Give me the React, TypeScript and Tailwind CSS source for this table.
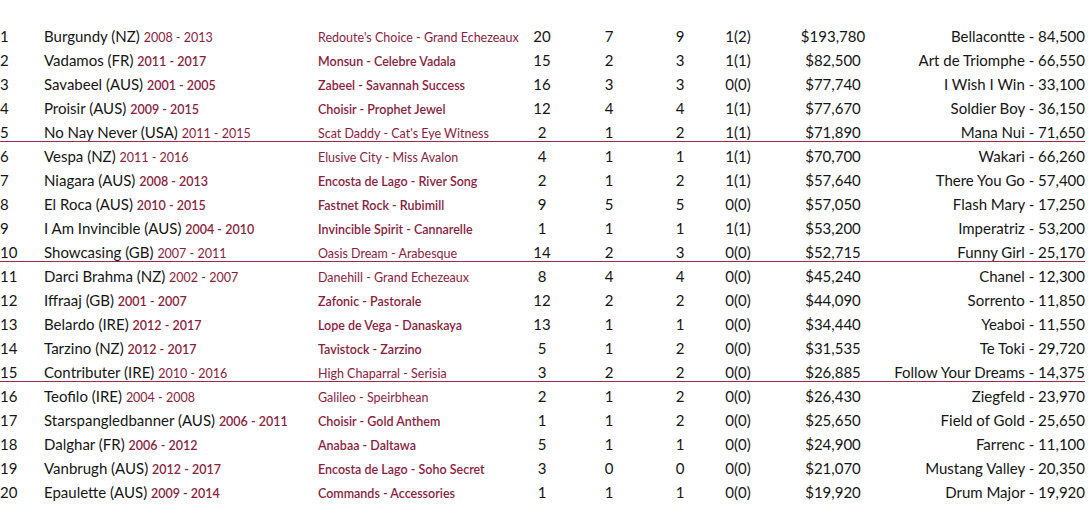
const sires = [
  { n: 1, name: "Burgundy (NZ)", yrs: "2008 - 2013", pedigree: "Redoute's Choice - Grand Echezeaux", runs: "20", wins: "7", places: "9", gr: "1(2)", prize: "$193,780", best: "Bellacontte - 84,500", light: true },
  { n: 2, name: "Vadamos (FR)", yrs: "2011 - 2017", pedigree: "Monsun - Celebre Vadala", runs: "15", wins: "2", places: "3", gr: "1(1)", prize: "$82,500", best: "Art de Triomphe - 66,550" },
  { n: 3, name: "Savabeel (AUS)", yrs: "2001 - 2005", pedigree: "Zabeel - Savannah Success", runs: "16", wins: "3", places: "3", gr: "0(0)", prize: "$77,740", best: "I Wish I Win - 33,100" },
  { n: 4, name: "Proisir (AUS)", yrs: "2009 - 2015", pedigree: "Choisir - Prophet Jewel", runs: "12", wins: "4", places: "4", gr: "1(1)", prize: "$77,670", best: "Soldier Boy - 36,150" },
  { n: 5, name: "No Nay Never (USA)", yrs: "2011 - 2015", pedigree: "Scat Daddy - Cat's Eye Witness", runs: "2", wins: "1", places: "2", gr: "1(1)", prize: "$71,890", best: "Mana Nui - 71,650", light: true, rule: true },
  { n: 6, name: "Vespa (NZ)", yrs: "2011 - 2016", pedigree: "Elusive City - Miss Avalon", runs: "4", wins: "1", places: "1", gr: "1(1)", prize: "$70,700", best: "Wakari - 66,260", light: true },
  { n: 7, name: "Niagara (AUS)", yrs: "2008 - 2013", pedigree: "Encosta de Lago - River Song", runs: "2", wins: "1", places: "2", gr: "1(1)", prize: "$57,640", best: "There You Go - 57,400" },
  { n: 8, name: "El Roca (AUS)", yrs: "2010 - 2015", pedigree: "Fastnet Rock - Rubimill", runs: "9", wins: "5", places: "5", gr: "0(0)", prize: "$57,050", best: "Flash Mary - 17,250" },
  { n: 9, name: "I Am Invincible (AUS)", yrs: "2004 - 2010", pedigree: "Invincible Spirit - Cannarelle", runs: "1", wins: "1", places: "1", gr: "1(1)", prize: "$53,200", best: "Imperatriz - 53,200" },
  { n: 10, name: "Showcasing (GB)", yrs: "2007 - 2011", pedigree: "Oasis Dream - Arabesque", runs: "14", wins: "2", places: "3", gr: "0(0)", prize: "$52,715", best: "Funny Girl - 25,170", light: true, rule: true },
  { n: 11, name: "Darci Brahma (NZ)", yrs: "2002 - 2007", pedigree: "Danehill - Grand Echezeaux", runs: "8", wins: "4", places: "4", gr: "0(0)", prize: "$45,240", best: "Chanel - 12,300", light: true },
  { n: 12, name: "Iffraaj (GB)", yrs: "2001 - 2007", pedigree: "Zafonic - Pastorale", runs: "12", wins: "2", places: "2", gr: "0(0)", prize: "$44,090", best: "Sorrento - 11,850" },
  { n: 13, name: "Belardo (IRE)", yrs: "2012 - 2017", pedigree: "Lope de Vega - Danaskaya", runs: "13", wins: "1", places: "1", gr: "0(0)", prize: "$34,440", best: "Yeaboi - 11,550" },
  { n: 14, name: "Tarzino (NZ)", yrs: "2012 - 2017", pedigree: "Tavistock - Zarzino", runs: "5", wins: "1", places: "2", gr: "0(0)", prize: "$31,535", best: "Te Toki - 29,720" },
  { n: 15, name: "Contributer (IRE)", yrs: "2010 - 2016", pedigree: "High Chaparral - Serisia", runs: "3", wins: "2", places: "2", gr: "0(0)", prize: "$26,885", best: "Follow Your Dreams - 14,375", light: true, rule: true },
  { n: 16, name: "Teofilo (IRE)", yrs: "2004 - 2008", pedigree: "Galileo - Speirbhean", runs: "2", wins: "1", places: "2", gr: "0(0)", prize: "$26,430", best: "Ziegfeld - 23,970", light: true },
  { n: 17, name: "Starspangledbanner (AUS)", yrs: "2006 - 2011", pedigree: "Choisir - Gold Anthem", runs: "1", wins: "1", places: "2", gr: "0(0)", prize: "$25,650", best: "Field of Gold - 25,650" },
  { n: 18, name: "Dalghar (FR)", yrs: "2006 - 2012", pedigree: "Anabaa - Daltawa", runs: "5", wins: "1", places: "1", gr: "0(0)", prize: "$24,900", best: "Farrenc - 11,100" },
  { n: 19, name: "Vanbrugh (AUS)", yrs: "2012 - 2017", pedigree: "Encosta de Lago - Soho Secret", runs: "3", wins: "0", places: "0", gr: "0(0)", prize: "$21,070", best: "Mustang Valley - 20,350" },
  { n: 20, name: "Epaulette (AUS)", yrs: "2009 - 2014", pedigree: "Commands - Accessories", runs: "1", wins: "1", places: "1", gr: "0(0)", prize: "$19,920", best: "Drum Major - 19,920" },
];

export default function App() {
  return (
    <div className="h-[518px] w-[1089px] overflow-hidden bg-white pr-[4px] pt-[24px] font-['Lato',sans-serif] text-[15px] leading-6 text-[#151515]">
      {sires.map((s) => {
        const burg = s.light ? "font-normal" : "font-semibold";
        return (
          <div
            key={s.n}
            className={
              s.rule
                ? "mb-[2px] grid h-[22px] grid-cols-[44px_274px_204px_40px_94px_48px_68px_122px_1fr] items-baseline whitespace-nowrap border-b border-[#9a2a4c]"
                : "grid h-6 grid-cols-[44px_274px_204px_40px_94px_48px_68px_122px_1fr] items-baseline whitespace-nowrap"
            }
          >
            <span>{s.n}</span>
            <span>
              {s.name}{" "}
              <span className={`text-[12.5px] text-[#8c1d40] ${burg}`}>{s.yrs}</span>
            </span>
            <span className={`text-[12.5px] text-[#8c1d40] ${burg}`}>{s.pedigree}</span>
            <span className="text-center">{s.runs}</span>
            <span className="text-center">{s.wins}</span>
            <span className="text-center">{s.places}</span>
            <span className="text-center">{s.gr}</span>
            <span className="text-center">{s.prize}</span>
            <span className="flex justify-end">{s.best}</span>
          </div>
        );
      })}
    </div>
  );
}
